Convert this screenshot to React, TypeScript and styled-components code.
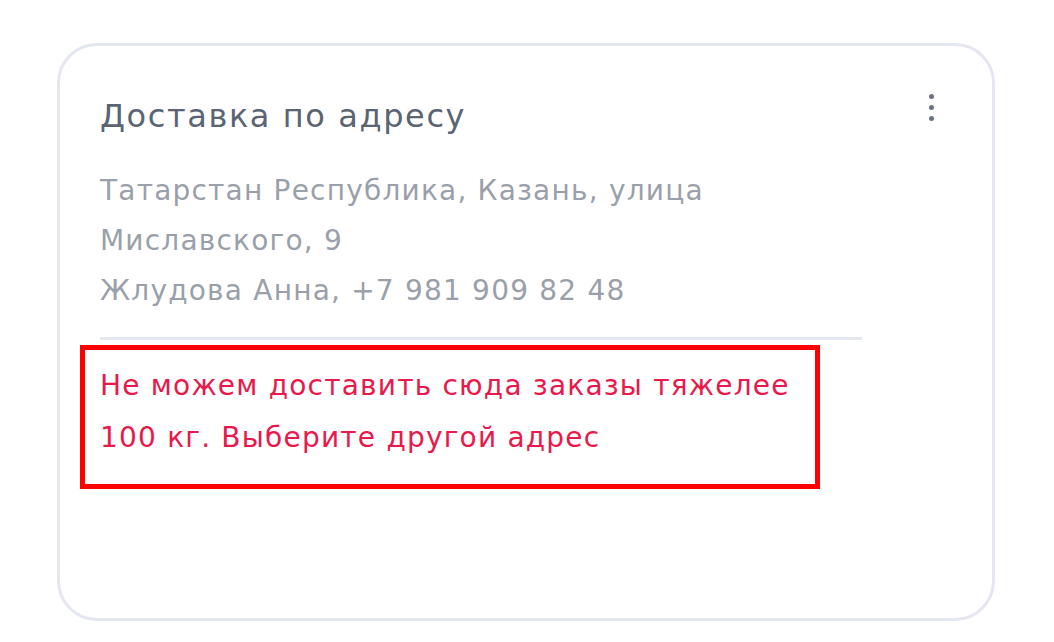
import styled, { createGlobalStyle } from "styled-components";

const GlobalStyle = createGlobalStyle`
  html, body {
    margin: 0;
    padding: 0;
    background: #ffffff;
  }
  body {
    font-family: "DejaVu Sans", "Noto Sans", sans-serif;
  }
`;

const Page = styled.div`
  padding: 43px 0 0 57px;
`;

const Card = styled.div`
  box-sizing: border-box;
  width: 938px;
  height: 578px;
  border: 3px solid #e4e7ef;
  border-radius: 40px;
  padding: 50px 40px 0 40px;
  display: flex;
  flex-direction: column;
`;

const Header = styled.div`
  display: flex;
  justify-content: space-between;
  align-items: flex-start;
`;

const Title = styled.h2`
  margin: 0;
  font-size: 32px;
  line-height: 40px;
  letter-spacing: 1.6px;
  font-weight: 400;
  color: #5b6472;
`;

const MenuButton = styled.button`
  border: none;
  background: none;
  padding: 0;
  margin: -2px 18px 0 0;
  display: flex;
  flex-direction: column;
  gap: 6px;
  cursor: pointer;
`;

const Dot = styled.span`
  width: 5px;
  height: 5px;
  border-radius: 50%;
  background: #6b7280;
`;

const Body = styled.div`
  width: 762px;
  margin-top: 30px;
`;

const Address = styled.p`
  margin: 0;
  font-size: 28px;
  line-height: 50px;
  letter-spacing: 1.2px;
  color: #9aa0a9;
`;

const Divider = styled.hr`
  border: none;
  height: 3px;
  background: #e4e7ef;
  margin: 21px 0 0 0;
`;

const Warning = styled.div`
  box-sizing: border-box;
  width: 740px;
  margin: 5px 0 0 -20px;
  padding: 10px 15px 20px 15px;
  border: 5px solid #ff0000;
`;

const WarningText = styled.p`
  margin: 0;
  font-size: 28px;
  line-height: 52px;
  letter-spacing: 1.2px;
  color: #e8194b;
`;

export default function App(): React.ReactElement {
  return (
    <>
      <GlobalStyle />
      <Page>
        <Card>
          <Header>
            <Title>Доставка по адресу</Title>
            <MenuButton aria-label="Меню">
              <Dot />
              <Dot />
              <Dot />
            </MenuButton>
          </Header>
          <Body>
            <Address>
              Татарстан Республика, Казань, улица
              <br />
              Миславского, 9
              <br />
              Жлудова Анна, +7 981 909 82 48
            </Address>
            <Divider />
            <Warning>
              <WarningText>
                Не можем доставить сюда заказы тяжелее
                <br />
                100 кг. Выберите другой адрес
              </WarningText>
            </Warning>
          </Body>
        </Card>
      </Page>
    </>
  );
}
